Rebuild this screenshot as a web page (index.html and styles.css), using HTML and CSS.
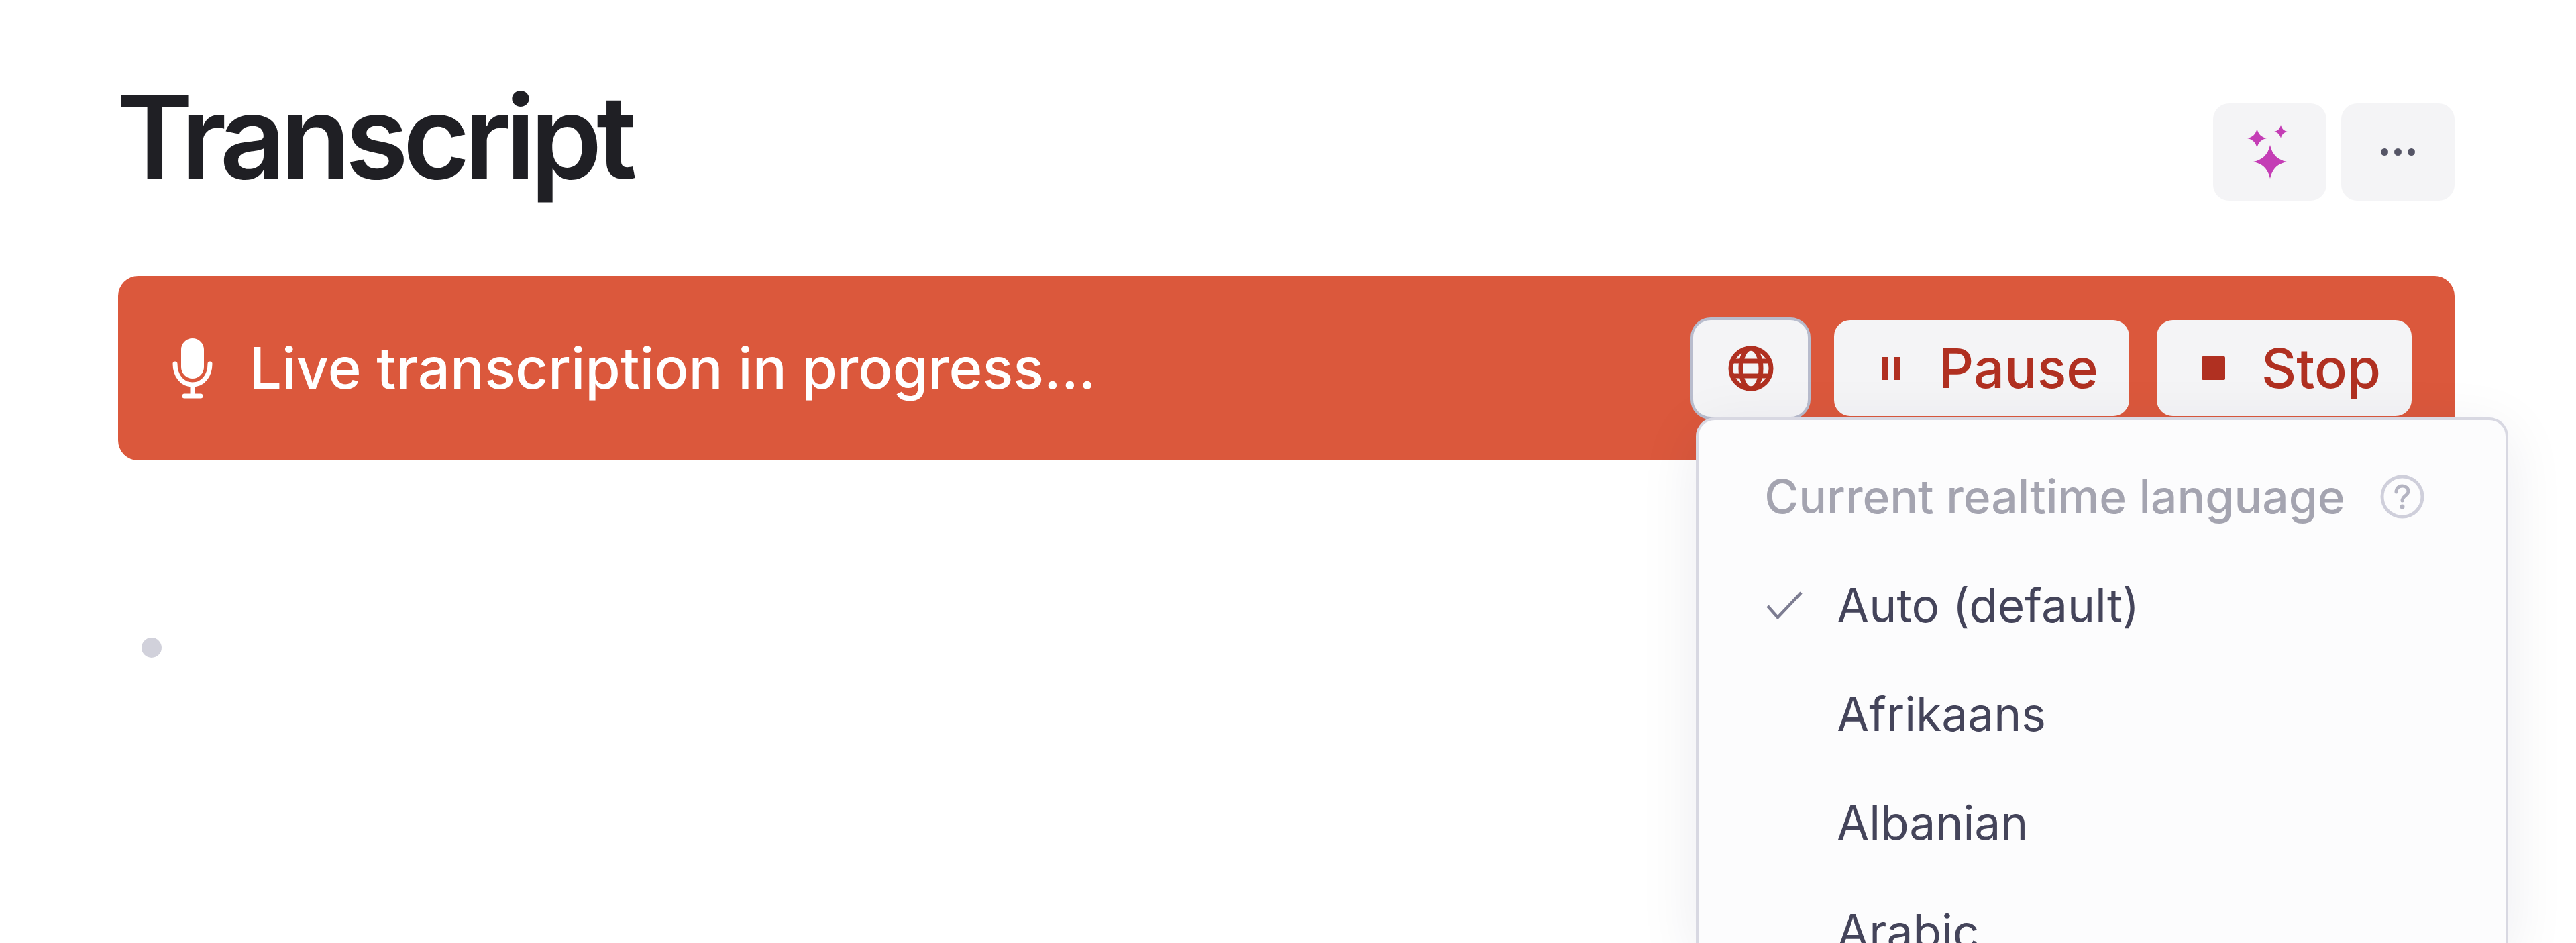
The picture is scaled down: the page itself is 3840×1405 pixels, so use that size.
FILE: index.html
```html
<!DOCTYPE html>
<html lang="en">
<head>
  <meta charset="UTF-8" />
  <title>Transcript</title>
  <link rel="stylesheet" href="styles.css">
</head>
<body>

  <div class="page">
    <div class="title-row">
      <h1>Transcript</h1>
      <div class="title-actions">
        <button class="square-btn">
          <svg class="sparkle-icon" viewBox="0 0 100 100">
            <path d="M50 39C53 53 61 61 75 64C61 67 53 75 50 89C47 75 39 67 25 64C39 61 47 53 50 39Z"/>
            <path d="M30.500 14.500C32.250 22.600 36.900 27.250 45 29C36.900 30.750 32.250 35.400 30.500 43.500C28.750 35.400 24.100 30.750 16 29C24.100 27.250 28.750 22.600 30.500 14.500Z"/>
            <path d="M66 9C67.200 14.600 70.400 17.800 76 19C70.400 20.200 67.200 23.400 66 29C64.800 23.400 61.600 20.200 56 19C61.600 17.800 64.800 14.600 66 9Z"/>
          </svg>
        </button>
        <button class="square-btn">
          <span class="dots"><i></i><i></i><i></i></span>
        </button>
      </div>
    </div>

    <div class="live-bar">
      <div class="live-label">
        <svg class="mic-icon" viewBox="0 0 62 90">
          <rect x="14" y="0" width="34" height="60" rx="17" fill="#fff"/>
          <path d="M5 38C5 55 15 69 31 69C47 69 57 55 57 38M31 69V86M19 86H43" fill="none" stroke="#fff" stroke-width="7" stroke-linecap="round"/>
        </svg>
        <span>Live transcription in progress...</span>
      </div>
      <div class="live-actions">
        <div class="lang-wrap">
          <button class="bar-btn globe-btn">
            <svg class="globe-icon" viewBox="0 0 68 68" fill="none" stroke="#b03021" stroke-width="7">
              <circle cx="34" cy="34" r="30"/>
              <ellipse cx="34" cy="34" rx="15" ry="30"/>
              <path d="M6 23H62M6 45H62"/>
            </svg>
          </button>
          <div class="lang-menu">
            <div class="menu-head">
              <span>Current realtime language</span>
              <svg class="help-icon" viewBox="0 0 66 66" fill="none">
                <circle cx="33" cy="33" r="30" stroke="#cfcfdb" stroke-width="5"/>
                <path d="M24 26C24 20 28 17 33 17C38 17 42 20 42 25C42 31 33 32 33 39" stroke="#b4b4c2" stroke-width="5" stroke-linecap="round"/>
                <circle cx="33" cy="48" r="3.500" fill="#b4b4c2"/>
              </svg>
            </div>
            <div class="menu-item">
              <svg class="check-icon" viewBox="0 0 54 42" fill="none">
                <path d="M2 22L17 39L52 2" stroke="#7d7d92" stroke-width="4.500"/>
              </svg>
              <span>Auto (default)</span>
            </div>
            <div class="menu-item">Afrikaans</div>
            <div class="menu-item">Albanian</div>
            <div class="menu-item">Arabic</div>
          </div>
        </div>
        <button class="bar-btn text-btn">
          <span class="btn-glyph"><i class="pause-bar"></i><i class="pause-bar"></i></span>
          Pause
        </button>
        <button class="bar-btn text-btn">
          <span class="btn-glyph"><i class="stop-box"></i></span>
          Stop
        </button>
      </div>
    </div>

    <div class="transcript-body">
      <span class="empty-dot"></span>
    </div>
  </div>

</body>
</html>
```

FILE: styles.css
```css
html, body {
  margin: 0;
  height: 100%;
  overflow: hidden;
}

body {
  background: #fff;
  font-family: Inter, "Noto Sans", sans-serif;
  color: #1f1f24;
}

.page {
  padding: 0 181px 0 176px;
}

.title-row {
  display: flex;
  align-items: flex-start;
  justify-content: space-between;
  height: 411px;
}

h1 {
  margin: 111px 0 0 -2px;
  font-size: 172px;
  line-height: 184px;
  font-weight: 600;
  letter-spacing: -8.500px;
}

.title-actions {
  display: flex;
  gap: 22px;
  margin-top: 154px;
}

button {
  border: none;
  padding: 0;
  font-family: inherit;
  cursor: pointer;
}

.square-btn {
  display: flex;
  align-items: center;
  justify-content: center;
  width: 169px;
  height: 145px;
  background: #f4f4f6;
  border-radius: 24px;
}

.sparkle-icon {
  width: 100px;
  height: 100px;
  fill: #c43db5;
}

.dots {
  display: flex;
  gap: 9px;
}

.dots i {
  width: 11px;
  height: 11px;
  border-radius: 50%;
  background: #555566;
}

.live-bar {
  display: flex;
  align-items: center;
  justify-content: space-between;
  height: 275px;
  padding: 0 64px 0 80px;
  background: #db583c;
  border-radius: 30px;
}

.live-label {
  display: flex;
  align-items: center;
  gap: 54px;
  color: #fff;
  font-size: 85px;
  font-weight: 500;
}

.mic-icon {
  width: 62px;
  height: 90px;
}

.live-actions {
  display: flex;
  align-items: center;
  gap: 41px;
}

.bar-btn {
  display: flex;
  align-items: center;
  height: 143px;
  background: #f4f4f6;
  border-radius: 24px;
  color: #b03021;
}

.lang-wrap {
  position: relative;
  margin-right: -6px;
}

.globe-btn {
  justify-content: center;
  box-sizing: border-box;
  width: 179px;
  height: 152px;
  border: 4px solid #b8bccd;
  border-radius: 30px;
}

.globe-icon {
  width: 68px;
  height: 68px;
}

.text-btn {
  padding: 0 46px 0 55px;
  font-size: 81px;
  font-weight: 500;
}

.btn-glyph {
  display: flex;
  align-items: center;
  justify-content: center;
  gap: 8px;
  width: 60px;
  margin-right: 41px;
}

.pause-bar {
  width: 9px;
  height: 34px;
  background: #b03021;
}

.stop-box {
  width: 35px;
  height: 35px;
  background: #b03021;
  border-radius: 2px;
}

.lang-menu {
  position: absolute;
  top: 149px;
  left: 8px;
  box-sizing: border-box;
  width: 1211px;
  height: 790px;
  overflow: hidden;
  padding: 0 100px 0 98px;
  background: #fcfcfd;
  border: 4px solid #d8d8e2;
  border-bottom: none;
  border-radius: 28px 28px 0 0;
  box-shadow: 0 20px 90px rgba(30, 30, 60, 0.08);
}

.menu-head {
  display: flex;
  align-items: center;
  justify-content: space-between;
  height: 162px;
  margin-top: 33px;
  padding-right: 21px;
  color: #a4a4b0;
  font-size: 69.500px;
  font-weight: 500;
}

.help-icon {
  width: 66px;
  height: 66px;
}

.menu-item {
  display: flex;
  align-items: center;
  height: 162px;
  padding-left: 108px;
  color: #44445a;
  font-size: 69.500px;
  position: relative;
}

.check-icon {
  position: absolute;
  left: 3px;
  top: 60px;
  width: 54px;
  height: 42px;
}

.transcript-body {
  padding: 264px 0 0 35px;
}

.empty-dot {
  display: block;
  width: 30px;
  height: 30px;
  border-radius: 50%;
  background: #d1d1db;
}
```
